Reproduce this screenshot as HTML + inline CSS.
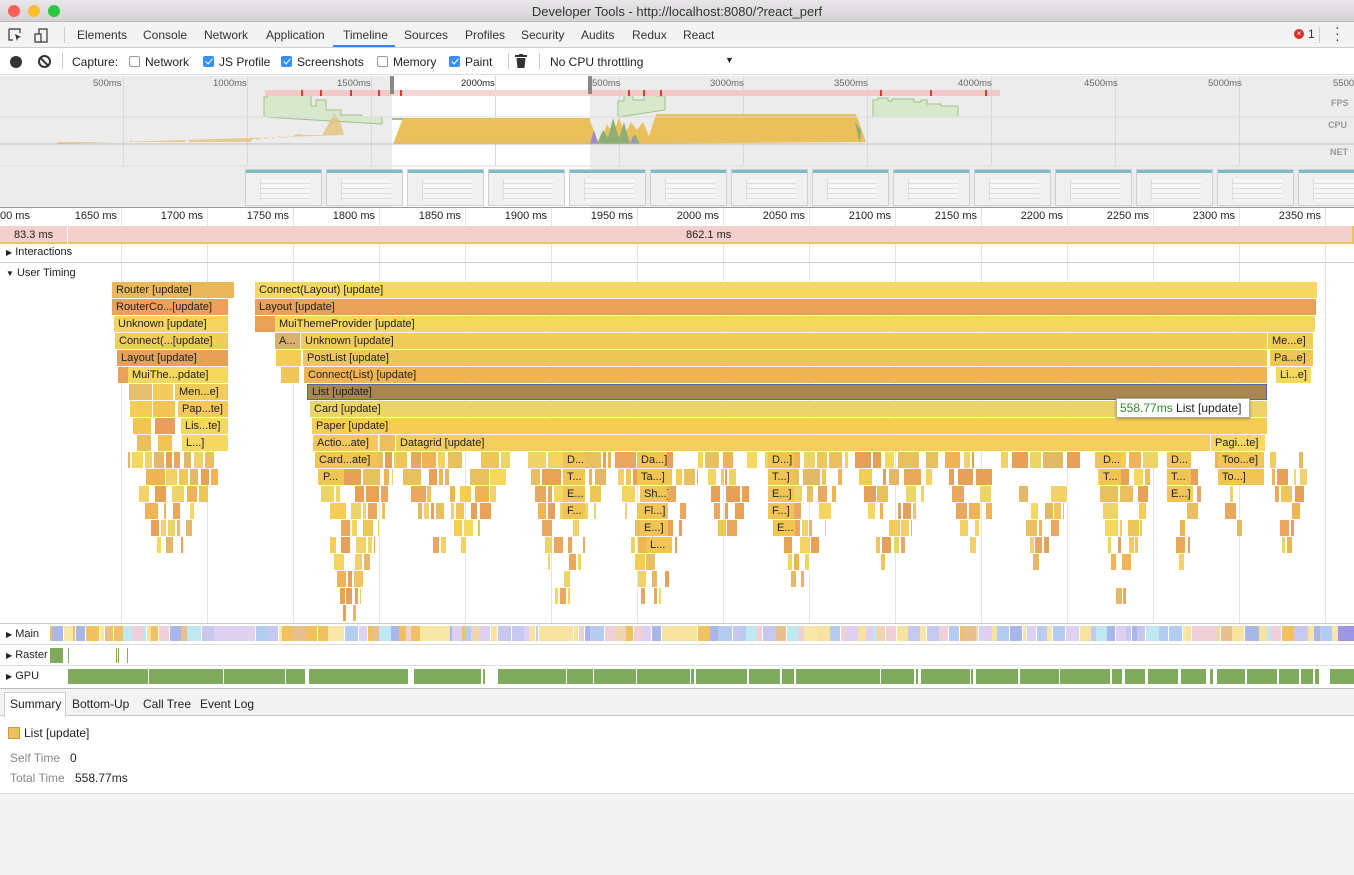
<!DOCTYPE html><html><head><meta charset="utf-8"><style>
*{box-sizing:border-box;margin:0;padding:0}
body{width:1354px;height:875px;overflow:hidden;font-family:"Liberation Sans",sans-serif;font-size:12px;color:#222;background:#fff;position:relative}
.a{position:absolute}
.t{position:absolute;white-space:nowrap}
.b{position:absolute;height:16px;font-size:11px;line-height:16px;padding-left:4px;overflow:hidden;white-space:nowrap;color:#222}
.cb{display:inline-block;width:11px;height:11px;border:1px solid #999;border-radius:2px;vertical-align:-1px;margin-right:5px;background:#fff}
.cb.on{background:#3b8ef0;border-color:#3b8ef0;position:relative}
.cb.on:after{content:"";position:absolute;left:3px;top:0px;width:3px;height:6px;border:solid #fff;border-width:0 1.5px 1.5px 0;transform:rotate(40deg)}
.vl{position:absolute;width:1px;background:#e4e4e4}
</style></head><body>
<div class="a" style="left:0;top:0;width:1354px;height:22px;background:linear-gradient(#e9e7e9,#d4d2d4);border-bottom:1px solid #b9b9b9"></div>
<div class="a" style="left:8px;top:5px;width:12px;height:12px;border-radius:6px;background:#fc5f57"></div>
<div class="a" style="left:28px;top:5px;width:12px;height:12px;border-radius:6px;background:#fdbc2e"></div>
<div class="a" style="left:48px;top:5px;width:12px;height:12px;border-radius:6px;background:#28c840"></div>
<div class="t" style="left:0;width:1354px;text-align:center;top:4px;font-size:13px;color:#333">Developer Tools - http://localhost:8080/?react_perf</div>
<div class="a" style="left:0;top:22px;width:1354px;height:26px;background:#f3f3f3;border-bottom:1px solid #ccc"></div>
<svg class="a" style="left:8px;top:27px" width="44" height="18"><path d="M1 2h11v4M1 2v11h4" fill="none" stroke="#333" stroke-width="1.2"/><path d="M7 7l6 3-3 1-1 3z" fill="#333"/><rect x="31" y="2" width="8" height="13" fill="none" stroke="#333" stroke-width="1.2"/><rect x="27" y="7" width="6" height="8" fill="#f3f3f3" stroke="#333" stroke-width="1.2"/></svg>
<div class="a" style="left:64px;top:27px;width:1px;height:16px;background:#ccc"></div>
<div class="t" style="top:28px;left:77px;color:#333">Elements</div>
<div class="t" style="top:28px;left:143px;color:#333">Console</div>
<div class="t" style="top:28px;left:204px;color:#333">Network</div>
<div class="t" style="top:28px;left:266px;color:#333">Application</div>
<div class="t" style="top:28px;left:343px;color:#333">Timeline</div>
<div class="a" style="left:333px;top:45px;width:62px;height:2px;background:#3e82f7"></div>
<div class="t" style="top:28px;left:404px;color:#333">Sources</div>
<div class="t" style="top:28px;left:465px;color:#333">Profiles</div>
<div class="t" style="top:28px;left:521px;color:#333">Security</div>
<div class="t" style="top:28px;left:581px;color:#333">Audits</div>
<div class="t" style="top:28px;left:632px;color:#333">Redux</div>
<div class="t" style="top:28px;left:683px;color:#333">React</div>
<div class="a" style="left:1294px;top:29px;width:10px;height:10px;border-radius:5px;background:#d93025;color:#fff;font-size:8px;line-height:10px;text-align:center">×</div>
<div class="t" style="top:27px;left:1308px;color:#333">1</div>
<div class="a" style="left:1319px;top:27px;width:1px;height:16px;background:#ccc"></div>
<div class="t" style="top:24px;left:1335px;font-size:14px;color:#333;line-height:6px">·<br>·<br>·</div>
<div class="a" style="left:0;top:48px;width:1354px;height:27px;background:#fff;border-bottom:1px solid #ddd"></div>
<div class="a" style="left:10px;top:56px;width:12px;height:12px;border-radius:6px;background:#333"></div>
<div class="a" style="left:38px;top:55px;width:13px;height:13px;border-radius:7px;border:2px solid #333"></div>
<div class="a" style="left:39px;top:61px;width:11px;height:2px;background:#333;transform:rotate(45deg)"></div>
<div class="a" style="left:62px;top:53px;width:1px;height:16px;background:#ccc"></div>
<div class="t" style="top:55px;left:72px">Capture:</div>
<div class="t" style="top:55px;left:129px"><span class="cb"></span>Network</div>
<div class="t" style="top:55px;left:203px"><span class="cb on"></span>JS Profile</div>
<div class="t" style="top:55px;left:281px"><span class="cb on"></span>Screenshots</div>
<div class="t" style="top:55px;left:377px"><span class="cb"></span>Memory</div>
<div class="t" style="top:55px;left:449px"><span class="cb on"></span>Paint</div>
<div class="a" style="left:508px;top:53px;width:1px;height:16px;background:#ccc"></div>
<svg class="a" style="left:515px;top:54px" width="12" height="14"><rect x="0" y="1" width="12" height="2" fill="#333"/><rect x="4" y="0" width="4" height="2" fill="#333"/><path d="M1.5 4h9l-1 10h-7z" fill="#333"/></svg>
<div class="a" style="left:539px;top:53px;width:1px;height:16px;background:#ccc"></div>
<div class="t" style="top:55px;left:550px">No CPU throttling</div>
<div class="t" style="top:55px;left:725px;font-size:9px">▼</div>
<div class="a" style="left:0;top:76px;width:1354px;height:132px;background:#ececec"></div>
<div class="a" style="left:392px;top:76px;width:198px;height:132px;background:#fff"></div>
<div id="ov"></div>
<svg class="a" style="left:0;top:76px" width="1354" height="132">
<path d="M264 41V21h3v-4h20v2h5v-2h6v2h6v-2h7v13h5v-6h10v10h15v5h21v2h20v7zM618 41V25h6v-6h9v5h11v-6h13v2h8v14zM873 41V24h5v-2h10v3h4v-2h22v3h7v-2h6v4h14v2h17v11h-103z" fill="#d7e8cc" stroke="#9cc285"/>
<path d="M392 43H590" stroke="#7ab05c" stroke-width="1.5"/>
<rect x="265" y="14" width="127" height="6" fill="#f1c9c6"/><rect x="392" y="14" width="198" height="6" fill="#f4d6d4"/><rect x="590" y="14" width="410" height="6" fill="#f1c9c6"/>
<g fill="#d93a32"><rect x="301" y="14" width="2" height="6"/><rect x="320" y="14" width="2" height="6"/><rect x="350" y="14" width="2" height="6"/><rect x="378" y="14" width="2" height="6"/><rect x="400" y="14" width="2" height="6"/><rect x="628" y="14" width="2" height="6"/><rect x="643" y="14" width="2" height="6"/><rect x="660" y="14" width="2" height="6"/><rect x="880" y="14" width="2" height="6"/><rect x="930" y="14" width="2" height="6"/><rect x="985" y="14" width="2" height="6"/></g>
<rect x="390" y="0" width="4" height="18" fill="#888"/><rect x="588" y="0" width="4" height="18" fill="#888"/>
<path d="M56 68l2-2h70l3-2 3 2h50l3-2 3 2h60l4-4 4 2 4-3 4 2 4-2 4 1 6-2 4 2 6-1 8-3 6 1 10 0 8 0 6-10 6-12 6 8 4 14z" fill="#e6c27a" opacity=".8"/>
<path d="M393 68l10-26h186l10 26zM600 68l7-20 6 10 6-16 6 16 6-12 6 8 6-8 6 14 7-22h200l10 28z" fill="#eac05d"/>
<path d="M597 68l6-14 5 8 5-20 6 20 5-16 6 22 5-10 5 10zM860 68l-5-22 6 8z" fill="#8fae74"/>
<path d="M590 68l4-14 4 14zM630 68l3-8 3 8z" fill="#9b8ccc"/>
<line x1="0" y1="68" x2="1354" y2="68" stroke="#bbb"/>
<line x1="0" y1="41" x2="1354" y2="41" stroke="#ddd"/><line x1="0" y1="90" x2="1354" y2="90" stroke="#ddd"/>
</svg>
<div class="t" style="top:78px;left:93px;font-size:9.5px;color:#666">500ms</div>
<div class="t" style="top:78px;left:213px;font-size:9.5px;color:#666">1000ms</div>
<div class="t" style="top:78px;left:337px;font-size:9.5px;color:#666">1500ms</div>
<div class="t" style="top:78px;left:461px;font-size:9.5px;color:#222">2000ms</div>
<div class="t" style="top:78px;left:592px;font-size:9.5px;color:#666">500ms</div>
<div class="t" style="top:78px;left:710px;font-size:9.5px;color:#666">3000ms</div>
<div class="t" style="top:78px;left:834px;font-size:9.5px;color:#666">3500ms</div>
<div class="t" style="top:78px;left:958px;font-size:9.5px;color:#666">4000ms</div>
<div class="t" style="top:78px;left:1084px;font-size:9.5px;color:#666">4500ms</div>
<div class="t" style="top:78px;left:1208px;font-size:9.5px;color:#666">5000ms</div>
<div class="t" style="top:78px;left:1333px;font-size:9.5px;color:#666">5500</div>
<div class="t" style="top:98px;left:1331px;font-size:9px;font-weight:bold;color:#999">FPS</div>
<div class="t" style="top:120px;left:1328px;font-size:9px;font-weight:bold;color:#999">CPU</div>
<div class="t" style="top:147px;left:1330px;font-size:9px;font-weight:bold;color:#999">NET</div>
<div class="a" style="left:0;top:207px;width:1354px;height:1px;background:#999"></div>
<div id="fl"></div>
<div class="a" style="left:0;top:226px;width:1354px;height:18px;background:#f3d0ce"></div>
<div class="a" style="left:0;top:242px;width:1352px;height:2px;background:#e9c264"></div>
<div class="a" style="left:1352px;top:226px;width:2px;height:18px;background:#e9c264"></div>
<div class="a" style="left:67px;top:226px;width:1px;height:18px;background:#fff"></div>
<div class="t" style="top:229px;left:14px;font-size:11px">83.3 ms</div>
<div class="t" style="top:229px;left:686px;font-size:11px">862.1 ms</div>
<div class="a" style="left:0;top:262px;width:1354px;height:1px;background:#ccc"></div>
<div class="t" style="top:246px;left:6px;font-size:11px"><span style="font-size:8px">▶</span> Interactions</div>
<div class="t" style="top:267px;left:6px;font-size:11px"><span style="font-size:8px">▼</span> User Timing</div>
<div id="fc"></div>
<div class="a" style="left:1116px;top:398px;width:134px;height:20px;background:#fff;border:1px solid #aaa;box-shadow:0 1px 3px rgba(0,0,0,.3);font-size:12px;line-height:18px;padding-left:3px"><span style="color:#2f8a2f">558.77ms</span> List [update]</div>
<div class="a" style="left:0;top:623px;width:1354px;height:65px;background:#fff"></div>
<div class="a" style="left:0;top:623px;width:1354px;height:1px;background:#ccc"></div>
<div class="a" style="left:0;top:644px;width:1354px;height:1px;background:#ddd"></div>
<div class="a" style="left:0;top:665px;width:1354px;height:1px;background:#ddd"></div>
<div id="tr"></div>
<div class="t" style="top:628px;left:6px;font-size:11px"><span style="font-size:8px">▶</span> Main</div>
<div class="t" style="top:649px;left:6px;font-size:11px"><span style="font-size:8px">▶</span> Raster</div>
<div class="t" style="top:670px;left:6px;font-size:11px"><span style="font-size:8px">▶</span> GPU</div>
<div class="a" style="left:0;top:688px;width:1354px;height:1px;background:#bbb"></div>
<div class="a" style="left:0;top:689px;width:1354px;height:27px;background:#f3f3f3;border-bottom:1px solid #ccc"></div>
<div class="a" style="left:0;top:716px;width:1354px;height:77px;background:#fff"></div>
<div class="a" style="left:4px;top:692px;width:62px;height:25px;background:#fff;border:1px solid #ccc;border-bottom:none"></div>
<div class="t" style="top:697px;left:10px">Summary</div>
<div class="t" style="top:697px;left:72px">Bottom-Up</div>
<div class="t" style="top:697px;left:143px">Call Tree</div>
<div class="t" style="top:697px;left:200px">Event Log</div>
<div class="a" style="left:8px;top:727px;width:12px;height:12px;background:#ecc05c;border:1px solid #c9a040"></div>
<div class="t" style="top:726px;left:24px">List [update]</div>
<div class="t" style="top:751px;left:10px;color:#888">Self Time</div><div class="t" style="top:751px;left:70px">0</div>
<div class="t" style="top:771px;left:10px;color:#888">Total Time</div><div class="t" style="top:771px;left:75px">558.77ms</div>
<div class="a" style="left:0;top:793px;width:1354px;height:82px;background:#f3f3f3;border-top:1px solid #ddd"></div>
<script>
var s=1234;function r(){s=(s*16807)%2147483647;return s/2147483647}
function h(el,x){document.getElementById(el).insertAdjacentHTML('beforeend',x)}
var gx=[121,207,293,379,465,551,637,723,809,895,981,1067,1153,1239,1325],o='';
o+='<div class="t" style="top:210px;left:0;font-size:11px">00 ms</div>';
gx.forEach(function(x,i){o+='<div class="vl" style="left:'+x+'px;top:208px;height:415px"></div><div class="t" style="top:210px;left:'+(x-48)+'px;width:44px;text-align:right;font-size:11px">'+(1650+i*50)+' ms</div>'});
h('fl',o);
o='';[0,124,248,372,496,620,744,868,992,1116,1240].forEach(function(x){o+='<div class="vl" style="left:'+(x+123)+'px;top:76px;height:90px;background:#d8d8d8"></div>'});
for(var x=245;x<1354;x+=81){o+='<div class="a" style="left:'+x+'px;top:169px;width:77px;height:37px;background:#f0f0f0;border:1px solid #d0d0d0"><div style="height:3px;background:#7cbcc8"></div><div style="margin:6px 0 0 14px;width:50px;height:22px;border-left:1px solid #ddd;background:repeating-linear-gradient(#f6f6f6 0 4px,#dcdcdc 4px 5px)"></div></div>'}
h('ov',o);
var C=['#f4d860','#e9a156','#f2d45e','#efc65a','#e6a05a','#f1b455','#ecd468','#f5cd55','#e8c060','#eaa760','#f3d16a','#e3b866'];
function b(x,w,row,c,t,ex){h('fc','<div class="b" style="left:'+x+'px;top:'+(282+row*17)+'px;width:'+w+'px;background:'+c+';'+(ex||'')+'">'+(t||'')+'</div>')}
var L=[[112,122,0,'#eab85a','Router [update]'],[255,1062,0,'#f4d860','Connect(Layout) [update]'],[112,116,1,'#eda05a','RouterCo...[update]'],[255,1061,1,'#e9a156','Layout [update]'],
[114,114,2,'#f2d45e','Unknown [update]'],[255,20,2,'#e9a156'],[275,1040,2,'#f4d75f','MuiThemeProvider [update]'],
[115,113,3,'#f1cc5a','Connect(...[update]'],[275,25,3,'#d9b26a','A...'],[301,966,3,'#f1cc5a','Unknown [update]'],[1268,45,3,'#f1cc5a','Me...e]'],
[117,111,4,'#e6a05a','Layout [update]'],[276,25,4,'#f5cd55'],[303,964,4,'#f0c658','PostList [update]'],[1270,43,4,'#f0c658','Pa...e]'],
[118,10,5,'#e9a156'],[128,100,5,'#f4d860','MuiThe...pdate]'],[281,18,5,'#efc65a'],[304,963,5,'#f1b455','Connect(List) [update]'],[1276,35,5,'#f4d860','Li...e]'],
[129,23,6,'#e6c070'],[153,20,6,'#f1cc5a'],[175,53,6,'#f1cc5a','Men...e]'],[307,960,6,'#a8874f','List [update]','border:1px solid #4a6fa0;line-height:14px'],
[130,22,7,'#f5cd55'],[153,22,7,'#f1c555'],[178,50,7,'#f4c85a','Pap...te]'],[310,957,7,'#ecd468','Card [update]'],
[133,18,8,'#f1c555'],[155,20,8,'#ec9e58'],[181,47,8,'#f4d860','Lis...te]'],[312,955,8,'#f5cd55','Paper [update]'],
[137,14,9,'#eac05d'],[158,14,9,'#f1c555'],[182,46,9,'#f4d860','L...]'],[313,65,9,'#f4c85a','Actio...ate]'],[380,15,9,'#eac05d'],[396,814,9,'#f4ce5a','Datagrid [update]'],[1211,54,9,'#f4d860','Pagi...te]']];
L.forEach(function(a){b(a[0],a[1],a[2],a[3],a[4],a[5])});
// clusters: x, width, depth (rows below row 9)
var K=[[128,100,6],[315,85,10],[396,130,6],[528,85,9],[615,90,10],[705,55,6],[765,85,8],[855,85,7],[945,65,6],[1012,70,7],[1095,65,9],[1165,45,7],[1215,50,5],[1270,43,6]];
K.forEach(function(k){for(var d=0;d<k[2];d++){var row=10+d,x=k[0],w=k[1],f=1-d/(k[2]+1);
 var cx=x+w*0.4, span=w*f;var st=cx-span*0.4;var en=cx+span*0.6;var p=st;
 while(p<en){var bw=Math.max(2,Math.min(en-p,4+r()*20*f));if(r()<0.75)b(Math.round(p),Math.max(1,Math.round(bw)-1),row,C[Math.floor(r()*C.length)],'','padding:0;border-right:1px solid #fff');p+=bw+(r()<0.4?2+r()*8*(1-f):0)}}});
var T=[[315,63,10,'Card...ate]'],[563,22,10,'D...'],[637,30,10,'Da...]'],[768,26,10,'D...]'],[1099,22,10,'D...'],[1167,24,10,'D...'],[1218,46,10,'Too...e]'],
[319,25,11,'P...'],[563,22,11,'T...'],[637,30,11,'Ta...]'],[768,26,11,'T...]'],[1099,22,11,'T...'],[1167,24,11,'T...'],[1218,46,11,'To...]'],
[563,22,12,'E...'],[640,28,12,'Sh...]'],[768,26,12,'E...]'],[1167,24,12,'E...]'],[563,22,13,'F...'],[640,28,13,'Fl...]'],[768,26,13,'F...]'],[640,28,14,'E...]'],[773,22,14,'E...'],[646,26,15,'L...']];
T.forEach(function(a){b(a[0],a[1],a[2],'#f1c555',a[3])});
var M=['#f7e2a0','#c6c8f0','#b4ccef','#f0d6b0','#f1c060','#ddd0f0','#bfe8f0','#e8c090','#f8e8a8','#a9b6e8','#f0d0d8'];o='';
for(var x=50;x<1354;){var w=2+r()*12;if(r()<0.05)w=25+r()*20;o+='<div class="a" style="left:'+x+'px;top:626px;width:'+w.toFixed(1)+'px;height:15px;background:'+M[Math.floor(r()*M.length)]+'"></div>';x+=w+(r()<0.4?1:0)}
o+='<div class="a" style="left:1338px;top:626px;width:16px;height:15px;background:#9d96e8"></div>';
o+='<div class="a" style="left:50px;top:648px;width:13px;height:15px;background:#7fab5f"></div>';
[68,116,118,127].forEach(function(x){o+='<div class="a" style="left:'+x+'px;top:648px;width:1px;height:15px;background:#7fab5f"></div>'});
var G=[[68,80],[149,65],[194,12],[206,17],[224,61],[286,19],[309,99],[414,67],[483,2],[498,68],[567,26],[594,42],[637,53],[691,3],[696,51],[749,31],[782,12],[796,84],[881,33],[916,2],[921,49],[971,2],[976,42],[1020,39],[1060,50],[1112,10],[1125,20],[1148,30],[1181,25],[1210,3],[1217,28],[1247,30],[1279,20],[1301,12],[1315,4],[1330,24]];
G.forEach(function(g){o+='<div class="a" style="left:'+g[0]+'px;top:669px;width:'+g[1]+'px;height:15px;background:#7fab5f"></div>'});
h('tr',o);
</script>
</body></html>
